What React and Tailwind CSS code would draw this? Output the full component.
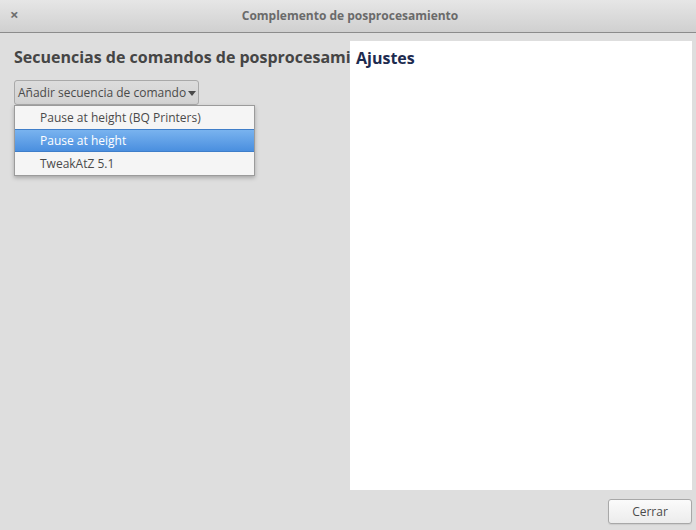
import React from 'react';

const scripts = ['Pause at height (BQ Printers)', 'Pause at height', 'TweakAtZ 5.1'];

export default function App() {
  return (
    <div className="w-[696px] h-[530px] bg-[#dedede] flex flex-col overflow-hidden" style={{ fontFamily: '"Open Sans", "Noto Sans", sans-serif' }}>
      {/* Title bar */}
      <div className="h-[33px] shrink-0 relative flex items-center justify-center bg-gradient-to-b from-[#e6e6e6] to-[#d0d0d0] border-b border-[#8c8c8c]">
        <span className="absolute left-[10px] top-[7px] text-[15px] leading-none font-bold text-[#6e6e6e]">×</span>
        <span className="text-[12px] font-bold text-[#6a6a6a] ml-[4px]">Complemento de posprocesamiento</span>
      </div>

      {/* Body */}
      <div className="flex-1 flex pt-[8px]">
        <div className="w-[350px] shrink-0 relative">
          <div className="w-[336px] ml-[14px] overflow-hidden whitespace-nowrap">
            <h2 className="text-[16px] font-bold text-[#454545] leading-[22px] mt-[5px]">Secuencias de comandos de posprocesamiento</h2>
          </div>
          <div className="ml-[14px] mt-[12px] relative">
            <button className="h-[25px] w-[185px] flex items-center pl-[3px] pr-[2px] pt-[1px] rounded-[3px] border border-[#a9a9a9] bg-gradient-to-b from-[#dcdcdc] to-[#d2d2d2] text-[12px] text-[#4a4a4a] whitespace-nowrap overflow-hidden">
              <span>Añadir secuencia de comando</span>
              <svg width="8" height="5" viewBox="0 0 8 5" className="ml-[2px] shrink-0">
                <path d="M0 0h8L4 5z" fill="#4a4a4a" />
              </svg>
            </button>
            <div className="absolute left-0 top-[25px] w-[241px] bg-[#f5f5f5] border border-[#9b9b9b] shadow-[0_2px_4px_rgba(0,0,0,0.25)] z-10">
              {scripts.map((s, i) => (
                <div
                  key={s}
                  className={
                    i === 1
                      ? 'h-[23px] flex items-center pl-[25px] pt-[1px] text-[12px] text-white bg-gradient-to-b from-[#79b3ef] to-[#4a8fdf] border-y border-[#3f7ec9] whitespace-nowrap'
                      : 'h-[23px] flex items-center pl-[25px] pt-[1px] text-[12px] text-[#4a4a4a] whitespace-nowrap'
                  }
                >
                  {s}
                </div>
              ))}
            </div>
          </div>
        </div>
        <div className="flex flex-col flex-1 mr-[4px]">
          <div className="h-[449px] bg-white px-[6px] pt-[6px]">
            <h2 className="text-[16px] font-bold text-[#1d2b4f] leading-[22px]">Ajustes</h2>
          </div>
          <div className="flex justify-end mt-[9px]">
            <button className="h-[25px] w-[84px] pt-[1px] rounded-[3px] border border-[#a8a8a8] bg-gradient-to-b from-[#fbfbfb] to-[#ececec] text-[12px] text-[#4a4a4a] shadow-[0_1px_1px_rgba(0,0,0,0.08)]">
              Cerrar
            </button>
          </div>
        </div>
      </div>
    </div>
  );
}
